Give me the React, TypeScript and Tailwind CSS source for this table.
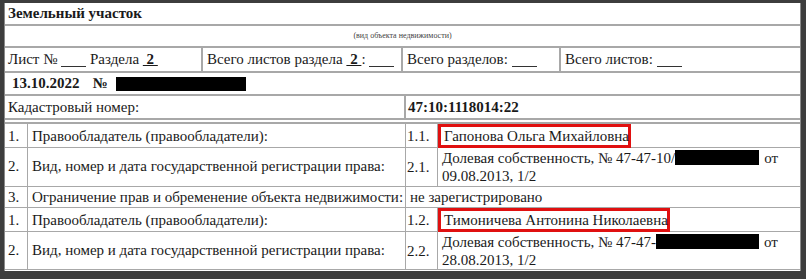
const serif = { fontFamily: '"Liberation Serif", "Times New Roman", serif' }

function Blank() {
  return <span className="inline-block w-[25px] translate-y-[-4px] border-b border-[#333] align-baseline">&nbsp;</span>
}

function Redacted({ w }: { w: string }) {
  return <span className={`inline-block h-[15px] bg-black align-[-2px] ${w}`} />
}

function OwnerRow({ n, sub, name, boxW }: { n: string; sub: string; name: string; boxW: string }) {
  return (
    <div className="flex h-[24px] border-b border-[#a8a8a8]">
      <div className="w-[23px] border-r border-[#a8a8a8] pl-[3px] pt-[2px]">{n}</div>
      <div className="w-[378px] border-r border-[#a8a8a8] pl-[4px] pt-[2px]">Правообладатель (правообладатели):</div>
      <div className="w-[32px] border-r border-[#a8a8a8] pl-[1px] pt-[2px]">{sub}</div>
      <div className="flex-1">
        <span className={`inline-block h-[24px] border-[3px] border-[#e01010] pl-[3px] leading-[18px] ${boxW}`}>{name}</span>
      </div>
    </div>
  )
}

function RightRow({ sub, prefix, box, date, h }: { sub: string; prefix: string; box: string; date: string; h: string }) {
  return (
    <div className={`flex border-b border-[#a8a8a8] ${h}`}>
      <div className="w-[23px] border-r border-[#a8a8a8] pl-[3px] pt-[8px]">2.</div>
      <div className="w-[378px] border-r border-[#a8a8a8] pl-[4px] pt-[8px]">
        Вид, номер и дата государственной регистрации права:
      </div>
      <div className="flex w-[32px] items-center border-r border-[#a8a8a8] pl-[1px]">{sub}</div>
      <div className="flex-1 pl-[4px] pt-[1px] leading-[18px]">
        <div>
          {prefix}
          <Redacted w={box} />
          <span className="ml-[5px]">от</span>
        </div>
        <div>{date}</div>
      </div>
    </div>
  )
}

export default function App() {
  return (
    <div
      className="h-[279px] w-[806px] overflow-hidden whitespace-nowrap bg-[#3d3d3d] pb-[8px] pl-[4px] pr-[5px] pt-[3px] text-[15px] text-[#1a1a1a]"
      style={serif}
    >
      <div className="h-full border-x border-[#8a8a8a] bg-white">
        <div className="flex h-[23px] items-center border-b-2 border-[#a8a8a8] pl-[3px] font-bold">
          Земельный участок
        </div>
        <div className="flex h-[22px] items-start justify-center border-b-2 border-[#a8a8a8] pt-[6px] text-[8px] leading-none text-[#444]">
          (вид объекта недвижимости)
        </div>
        <div className="flex h-[25px] border-b-2 border-[#a8a8a8] leading-[22px]">
          <div className="w-[198px] border-r-2 border-[#a8a8a8] pl-[3px]">
            Лист № <Blank /> Раздела <b className="underline">&nbsp;2&nbsp;</b>
          </div>
          <div className="w-[200px] border-r-2 border-[#a8a8a8] pl-[4px]">
            Всего листов раздела <b className="underline">&nbsp;2&nbsp;</b>: <Blank />
          </div>
          <div className="w-[158px] border-r-2 border-[#a8a8a8] pl-[4px]">
            Всего разделов: <Blank />
          </div>
          <div className="flex-1 pl-[4px]">
            Всего листов: <Blank />
          </div>
        </div>
        <div className="flex h-[23px] items-center border-b-2 border-[#a8a8a8] pl-[7px] font-bold">
          <span>13.10.2022</span>
          <span className="ml-[13px]">№</span>
          <span className="ml-[8px] inline-block h-[14px] w-[130px] bg-black" />
        </div>
        <div className="flex h-[24px] border-b-2 border-[#a8a8a8] leading-[22px]">
          <div className="w-[401px] border-r-2 border-[#a8a8a8] pl-[3px]">Кадастровый номер:</div>
          <div className="flex-1 pl-[2px] font-bold">47:10:1118014:22</div>
        </div>
        <div className="mt-[2px] border-t-2 border-[#a8a8a8] leading-[20px]">
          <OwnerRow n="1." sub="1.1." name="Гапонова Ольга Михайловна" boxW="w-[193px]" />
          <RightRow sub="2.1." prefix="Долевая собственность, № 47-47-10/" box="w-[84px]" date="09.08.2013, 1/2" h="h-[39px]" />
          <div className="flex h-[21px] border-b border-[#a8a8a8]">
            <div className="w-[23px] border-r border-[#a8a8a8] pl-[3px]">3.</div>
            <div className="w-[378px] border-r border-[#a8a8a8] pl-[4px]">
              Ограничение прав и обременение объекта недвижимости:
            </div>
            <div className="flex-1 pl-[4px]">не зарегистрировано</div>
          </div>
          <OwnerRow n="1." sub="1.2." name="Тимоничева Антонина Николаевна" boxW="w-[232px]" />
          <RightRow sub="2.2." prefix="Долевая собственность, № 47-47-" box="w-[103px]" date="28.08.2013, 1/2" h="h-[38px]" />
        </div>
      </div>
    </div>
  )
}
